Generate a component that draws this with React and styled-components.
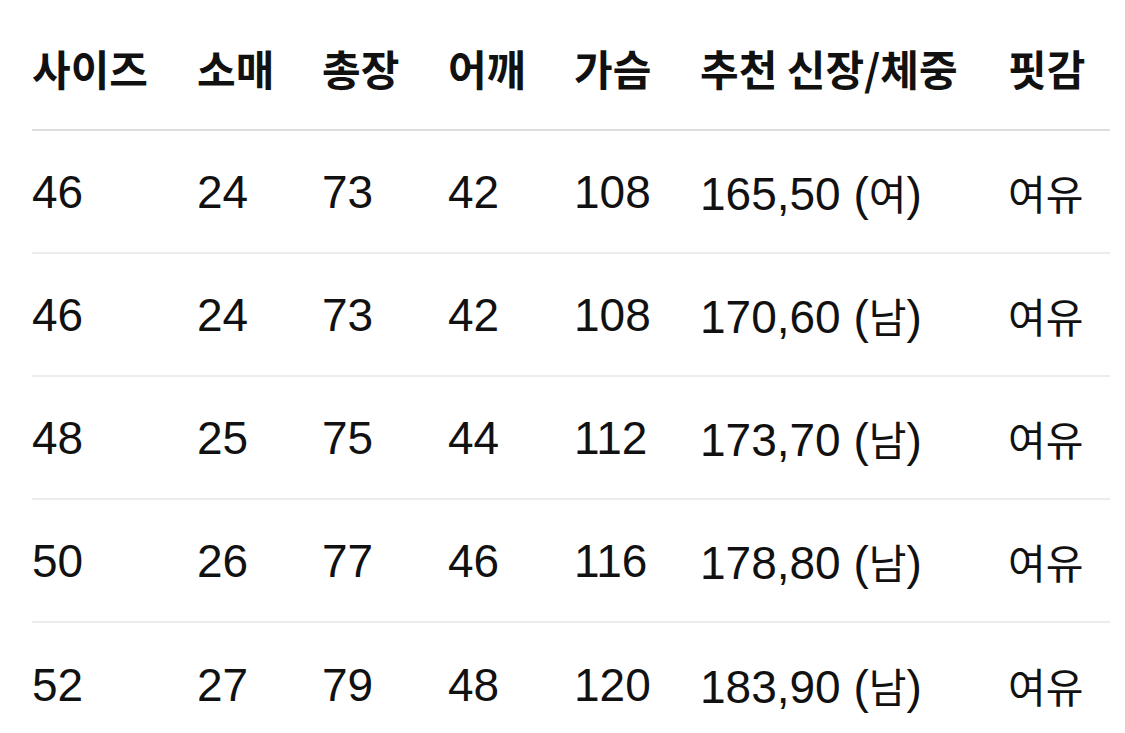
import React from 'react';
import styled, { createGlobalStyle } from 'styled-components';

const headers = ['사이즈', '소매', '총장', '어깨', '가슴', '추천 신장/체중', '핏감'];

const rows = [
	['46', '24', '73', '42', '108', '165,50', '여', '여유'],
	['46', '24', '73', '42', '108', '170,60', '남', '여유'],
	['48', '25', '75', '44', '112', '173,70', '남', '여유'],
	['50', '26', '77', '46', '116', '178,80', '남', '여유'],
	['52', '27', '79', '48', '120', '183,90', '남', '여유'],
];

function App() {
	return (
		<>
			<GlobalStyle />
			<Table>
				<HeadRow>
					{headers.map((h) => (
						<HeadCell key={h}>{h}</HeadCell>
					))}
				</HeadRow>
				{rows.map((r, i) => (
					<Row key={i} last={i === rows.length - 1}>
						{r.slice(0, 5).map((v, j) => (
							<Cell key={j}>{v}</Cell>
						))}
						<Cell>
							{r[5]} (<Ko>{r[6]}</Ko>)
						</Cell>
						<Cell>
							<Ko>{r[7]}</Ko>
						</Cell>
					</Row>
				))}
			</Table>
		</>
	);
}

export default App;

// STYLES
const GlobalStyle = createGlobalStyle`
	body {
		margin: 0;
		background: #fff;
		color: #111;
		font-family: "Liberation Sans", "Noto Sans CJK KR", sans-serif;
	}
`;

const Table = styled.div`
	width: 1078px;
	margin-left: 32px;
`;

const columns = '165px 125px 126px 126px 126px 308px 1fr';

const HeadRow = styled.div`
	display: grid;
	grid-template-columns: ${columns};
	align-items: center;
	height: 131px;
	padding-top: 6px;
	box-sizing: border-box;
	border-bottom: 2px solid #dddddd;
`;

const HeadCell = styled.div`
	font-family: "Noto Sans CJK KR", sans-serif;
	font-weight: 700;
	font-size: 42px;
	white-space: nowrap;
`;

const Row = styled.div`
	display: grid;
	grid-template-columns: ${columns};
	align-items: center;
	height: 123px;
	box-sizing: border-box;
	border-bottom: ${(p) => (p.last ? 'none' : '2px solid #ececec')};
`;

const Cell = styled.div`
	font-size: 46px;
	white-space: nowrap;
`;

const Ko = styled.span`
	font-family: "Noto Sans CJK KR", sans-serif;
	font-size: 41px;
`;
